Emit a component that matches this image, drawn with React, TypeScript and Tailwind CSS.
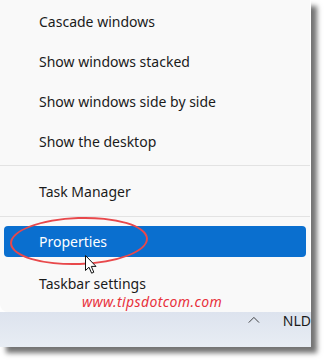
import React from 'react';

const items = ['Cascade windows', 'Show windows stacked', 'Show windows side by side', 'Show the desktop'];

const font = { fontFamily: '"Noto Sans", "Open Sans", sans-serif' };

const Cursor: React.FC = () => (
  <svg className="absolute left-[85px] top-[255px]" width="14" height="20" viewBox="0 0 14 20">
    <path
      d="M0.5 0.5 L0.5 15.5 L4 12.2 L6.6 18.2 L8.8 17.2 L6.3 11.4 L11 11.4 Z"
      fill="#ffffff"
      stroke="#111111"
      strokeWidth="1"
      strokeLinejoin="round"
    />
  </svg>
);

const Row: React.FC<{ label: string; className?: string }> = ({ label, className = '' }) => (
  <div className={`flex items-center pl-[39px] text-[14px] text-[#1b1b1b] ${className}`}>{label}</div>
);

export default function App() {
  return (
    <div className="w-[326px] h-[363px] bg-white" style={font}>
      <div className="relative w-[311px] h-[347px] overflow-hidden shadow-[6px_6px_5px_rgba(0,0,0,0.55)]">
        {/* context menu */}
        <div className="flex flex-col h-[312px] w-[310px] bg-[#f9f9f9] rounded-bl-lg pt-[1px]">
          {items.map((label) => (
            <Row key={label} label={label} className="h-10" />
          ))}
          <div className="mt-1 h-px bg-[#e3e3e3]" />
          <Row label="Task Manager" className="h-[50px]" />
          <div className="h-px bg-[#e3e3e3]" />
          <div className="mx-1 mt-[9px] h-[31px] rounded-[4px] bg-[#0a6fcf] flex items-center pl-[35px] text-[14px] text-white">
            Properties
          </div>
          <Row label="Taskbar settings" className="mt-[11px] h-[30px]" />
          <div className="-mt-[4px] h-4 leading-4 pl-[82px] text-[14px] italic text-[#e8323c] tracking-[0.4px]">
            www.tipsdotcom.com
          </div>
        </div>

        {/* taskbar strip */}
        <div className="flex items-start h-[35px] pt-[1px] bg-gradient-to-b from-[#dde3ee] to-[#e8edf4]">
          <svg className="ml-[248px] mt-[2px]" width="16" height="10" viewBox="0 0 16 10">
            <path d="M1 8.5 L8 1.5 L15 8.5" fill="none" stroke="#1b1b1b" strokeWidth="1.1" />
          </svg>
          <span className="ml-[23px] -mt-[2px] text-[14px] leading-5 text-[#1b1b1b]">NLD</span>
        </div>

        {/* red annotation ellipse */}
        <div className="absolute left-[10px] top-[217px] w-[138px] h-[48px] rounded-[50%] border-[2.5px] border-[#e8484b] -rotate-2" />
        <Cursor />
      </div>
    </div>
  );
}
